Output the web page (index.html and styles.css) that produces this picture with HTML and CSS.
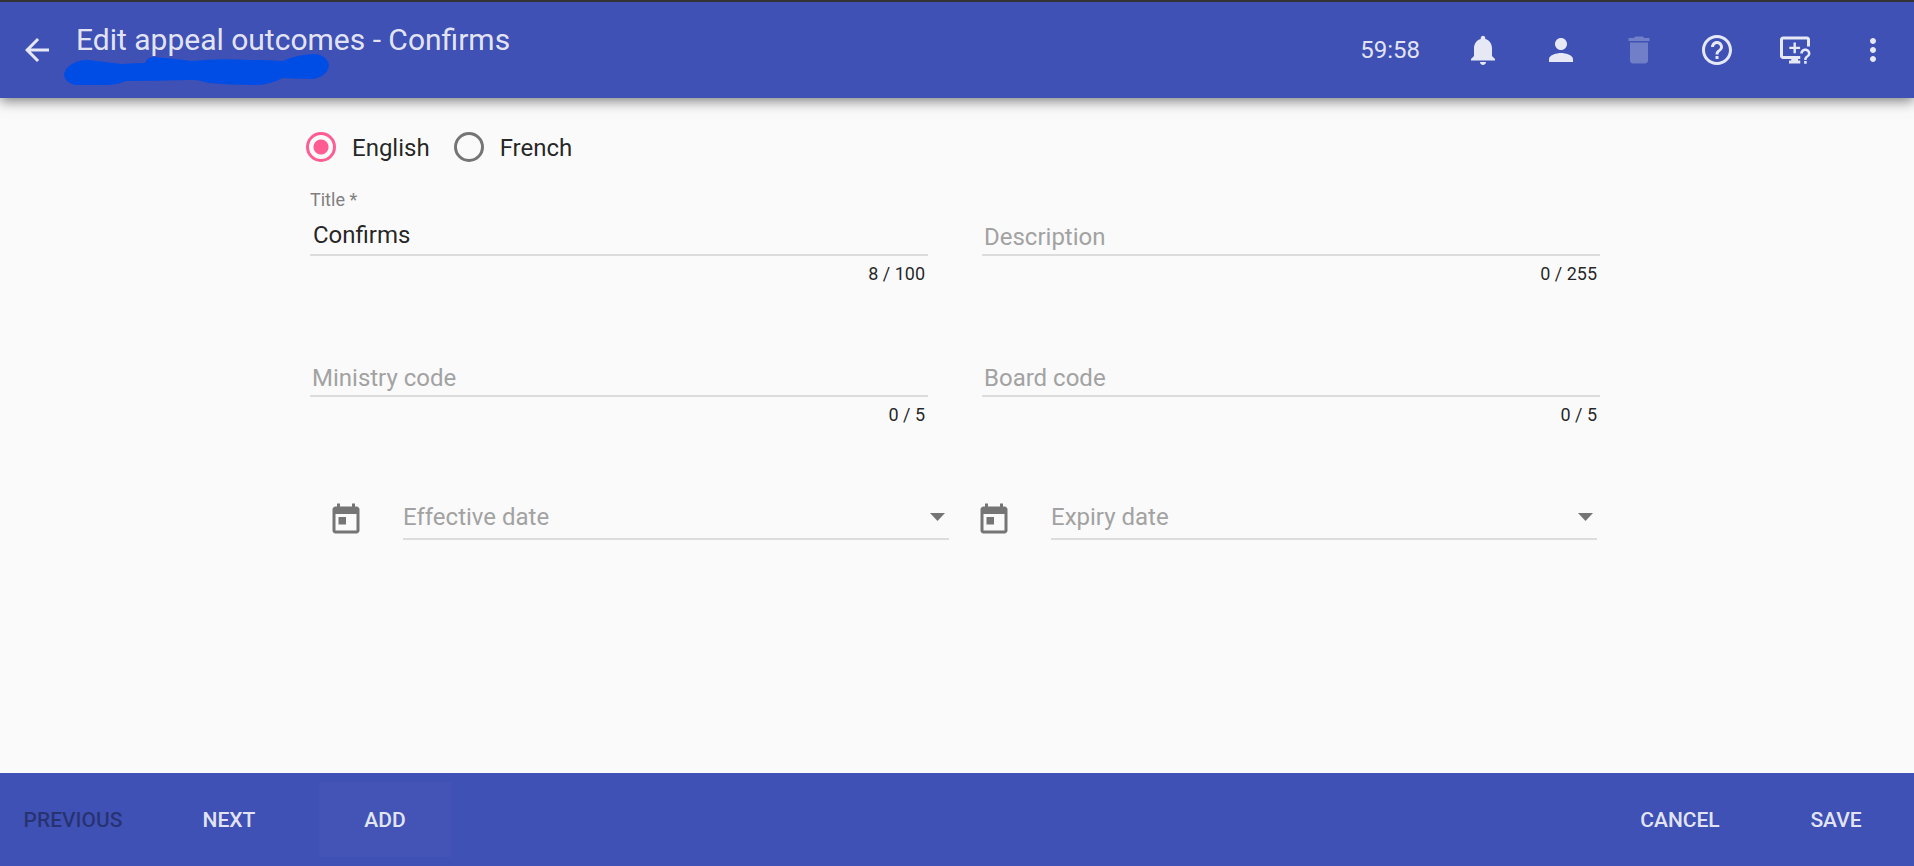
FILE: index.html
```
<!DOCTYPE html>
<html lang="en">
<head>
<meta charset="utf-8">
<meta name="viewport" content="width=device-width, initial-scale=1">
<title>Edit appeal outcomes - Confirms</title>
<link rel="stylesheet" href="styles.css">
</head>
<body>
<header class="toolbar">
  <button class="icon-button back" type="button" aria-label="Back">
    <svg class="icon" viewBox="0 0 24 24"><path d="M20 11H7.83l5.59-5.59L12 4l-8 8 8 8 1.41-1.41L7.83 13H20v-2z"/></svg>
  </button>
  <div class="heading">
    <h1 class="title">Edit appeal outcomes - Confirms</h1>
    <svg class="scribble" viewBox="0 0 266 32" aria-hidden="true"><path d="M12 8Q16 6 24 6Q42 8 58 10Q70 9 81 9Q83 3 91 3Q112 5 128 7Q156 4 184 6Q202 6 219 7Q234 0 252 0Q264 2 265 12Q263 22 250 25Q234 25 219 24Q204 31 194 31Q164 31 145 29Q130 25 124 26Q92 27 62 27Q52 31 42 31L12 31Q0 29 0 20Q2 12 12 8Z"/></svg>
  </div>
  <div class="actions">
    <time class="timer">59:58</time>
    <button class="icon-button" type="button" aria-label="Notifications">
      <svg class="icon" viewBox="0 0 24 24"><path d="M12 22c1.100 0 2-.9 2-2h-4c0 1.100.89 2 2 2zm6-6v-5c0-3.070-1.640-5.640-4.500-6.320V4c0-.83-.67-1.500-1.500-1.500s-1.500.67-1.500 1.500v.68C7.630 5.360 6 7.920 6 11v5l-2 2v1h16v-1l-2-2z"/></svg>
    </button>
    <button class="icon-button" type="button" aria-label="Account">
      <svg class="icon" viewBox="0 0 24 24"><path d="M12 12c2.210 0 4-1.790 4-4s-1.790-4-4-4-4 1.790-4 4 1.790 4 4 4zm0 2c-2.670 0-8 1.340-8 4v2h16v-2c0-2.660-5.330-4-8-4z"/></svg>
    </button>
    <button class="icon-button" type="button" aria-label="Delete" disabled>
      <svg class="icon" viewBox="0 0 24 24"><path d="M6 19c0 1.100.9 2 2 2h8c1.100 0 2-.9 2-2V7H6v12zM19 4h-3.500l-1-1h-5l-1 1H5v2h14V4z"/></svg>
    </button>
    <button class="icon-button" type="button" aria-label="Help">
      <svg class="icon" viewBox="0 0 24 24"><path d="M11 18h2v-2h-2v2zm1-16C6.480 2 2 6.480 2 12s4.480 10 10 10 10-4.480 10-10S17.520 2 12 2zm0 18c-4.410 0-8-3.590-8-8s3.590-8 8-8 8 3.590 8 8-3.590 8-8 8zm0-14c-2.210 0-4 1.790-4 4h2c0-1.100.9-2 2-2s2 .9 2 2c0 2-3 1.750-3 5h2c0-2.250 3-2.500 3-5 0-2.210-1.790-4-4-4z"/></svg>
    </button>
    <button class="icon-button" type="button" aria-label="Request support">
      <svg class="icon" viewBox="0 0 24 24"><path d="M4 3h16c1.100 0 2 .9 2 2v4.700h-2V5H4v11h11.500v2H14v1h1.500v2H8v-2h1.500v-1H4c-1.100 0-2-.9-2-2V5c0-1.100.9-2 2-2z"/><path d="M11 7h1.600v2.800h2.800v1.500h-2.800v2.800H11v-2.800H8.200V9.800H11z"/><path d="M18.100 19.400h1.700v1.700h-1.700zM18.900 11c-1.900 0-3.400 1.500-3.400 3.400h1.700c0-1 .7-1.700 1.700-1.700s1.700.7 1.700 1.700c0 1.600-2.500 1.500-2.500 4.200h1.700c0-1.900 2.500-2.100 2.500-4.200 0-1.900-1.500-3.400-3.400-3.400z"/></svg>
    </button>
    <button class="icon-button" type="button" aria-label="More options">
      <svg class="icon" viewBox="0 0 24 24"><path d="M12 8c1.100 0 2-.9 2-2s-.9-2-2-2-2 .9-2 2 .9 2 2 2zm0 2c-1.100 0-2 .9-2 2s.9 2 2 2 2-.9 2-2-.9-2-2-2zm0 6c-1.100 0-2 .9-2 2s.9 2 2 2 2-.9 2-2-.9-2-2-2z"/></svg>
    </button>
  </div>
</header>
<main class="content">
  <form class="form" id="outcome">
    <div class="languages" role="radiogroup" aria-label="Language">
      <label class="language"><input class="radio" type="radio" name="language" checked><span class="language-name">English</span></label>
      <label class="language"><input class="radio" type="radio" name="language"><span class="language-name">French</span></label>
    </div>
    <div class="fields">
      <div class="field">
        <label class="label" for="title">Title <span class="required">*</span></label>
        <input class="input filled" id="title" type="text" value="Confirms" maxlength="100">
        <div class="count">8 / 100</div>
      </div>
      <div class="field">
        <input class="input" type="text" placeholder="Description" aria-label="Description" maxlength="255">
        <div class="count">0 / 255</div>
      </div>
      <div class="field">
        <input class="input" type="text" placeholder="Ministry code" aria-label="Ministry code" maxlength="5">
        <div class="count">0 / 5</div>
      </div>
      <div class="field">
        <input class="input" type="text" placeholder="Board code" aria-label="Board code" maxlength="5">
        <div class="count">0 / 5</div>
      </div>
    </div>
    <div class="dates">
      <div class="date">
        <svg class="icon" viewBox="0 0 24 24" aria-hidden="true"><path d="M19 3h-1V1h-2v2H8V1H6v2H5c-1.110 0-1.990.9-1.990 2L3 19c0 1.100.89 2 2 2h14c1.100 0 2-.9 2-2V5c0-1.100-.9-2-2-2zm0 16H5V8h14v11zM7 10h5v5H7z"/></svg>
        <div class="date-box">
          <input class="date-input" type="text" placeholder="Effective date" aria-label="Effective date">
          <button class="arrow" type="button" aria-label="Choose effective date"></button>
        </div>
      </div>
      <div class="date">
        <svg class="icon" viewBox="0 0 24 24" aria-hidden="true"><path d="M19 3h-1V1h-2v2H8V1H6v2H5c-1.110 0-1.990.9-1.990 2L3 19c0 1.100.89 2 2 2h14c1.100 0 2-.9 2-2V5c0-1.100-.9-2-2-2zm0 16H5V8h14v11zM7 10h5v5H7z"/></svg>
        <div class="date-box">
          <input class="date-input" type="text" placeholder="Expiry date" aria-label="Expiry date">
          <button class="arrow" type="button" aria-label="Choose expiry date"></button>
        </div>
      </div>
    </div>
  </form>
</main>
<footer class="footer">
  <button class="button" type="button" disabled>PREVIOUS</button>
  <button class="button" type="button">NEXT</button>
  <button class="button active" type="button">ADD</button>
  <span class="spacer"></span>
  <button class="button" type="button">CANCEL</button>
  <button class="button" type="submit" form="outcome">SAVE</button>
</footer>
</body>
</html>
```
FILE: styles.css
```
* {
  box-sizing: border-box;
}

body {
  display: flex;
  flex-direction: column;
  min-height: 100vh;
  margin: 0;
  background: #fafafa;
  color: rgba(0, 0, 0, 0.87);
  font: 24px/32px Roboto, sans-serif;
}

button,
input {
  margin: 0;
  padding: 0;
  border: 0;
  border-radius: 0;
  background: none;
  color: inherit;
  font: inherit;
}

.icon {
  display: block;
  flex: none;
  width: 36px;
  height: 36px;
  fill: currentColor;
}

.toolbar {
  display: flex;
  align-items: center;
  min-height: 98px;
  border-top: 2px solid #333;
  background: #3f51b5;
  box-shadow: 0 3px 12px rgba(0, 0, 0, 0.5);
  color: rgba(255, 255, 255, 0.87);
}

.icon-button {
  display: grid;
  place-items: center;
  width: 60px;
  height: 60px;
}

.icon-button:disabled {
  opacity: 0.3;
}

.back {
  margin-left: 7px;
}

.heading {
  position: relative;
  flex: 1;
  padding-left: 9px;
}

.title {
  margin: 0 0 20px;
  font-size: 30px;
  font-weight: 400;
  line-height: 36px;
}

.scribble {
  position: absolute;
  top: 32px;
  left: -3px;
  width: 266px;
  height: 32px;
  fill: #004de6;
}

.actions {
  display: flex;
  align-items: center;
  gap: 18px;
  padding-right: 11px;
}

.timer {
  margin-right: 15px;
}

.content {
  flex: 1;
  padding: 0 28px 0 24px;
}

.form {
  width: 100%;
  max-width: 1290px;
  margin: 0 auto;
  padding-top: 32px;
}

.languages {
  display: flex;
  gap: 28px;
}

.language {
  display: flex;
  align-items: center;
  gap: 16px;
}

.language-name {
  padding-top: 2px;
}

.radio {
  appearance: none;
  width: 30px;
  height: 30px;
  margin-left: -4px;
  border: 3px solid #757575;
  border-radius: 50%;
}

.radio:checked {
  border-color: #ff5c93;
  background: radial-gradient(circle, #ff5c93 7px, transparent 8px);
}

.fields {
  display: grid;
  grid-template-columns: 1fr 1fr;
  column-gap: 54px;
  margin-top: -19px;
}

.field {
  display: flex;
  flex-direction: column;
  justify-content: flex-end;
  height: 141px;
}

.label {
  padding-bottom: 2px;
  color: #808080;
  font-size: 18px;
  line-height: 24px;
}

.input {
  width: 100%;
  height: 42px;
  padding: 6px 2px 0;
  border-bottom: 2px solid #dcdcdc;
}

.filled {
  padding: 2px 3px 0;
}

.input::placeholder,
.date-input::placeholder {
  color: #a2a2a2;
  opacity: 1;
}

.count {
  padding: 6px 3px 0;
  font-size: 18px;
  line-height: 24px;
  text-align: right;
}

.dates {
  display: grid;
  grid-template-columns: 1fr 1fr;
  column-gap: 27px;
  padding: 69px 3px 0 18px;
}

.date {
  display: flex;
  align-items: flex-end;
  gap: 39px;
}

.date .icon {
  margin-bottom: 2px;
  fill: #757575;
}

.date-box {
  display: flex;
  align-items: center;
  flex: 1;
  border-bottom: 2px solid #dcdcdc;
}

.date-input {
  flex: 1;
  min-width: 0;
  height: 42px;
}

.arrow {
  width: 15px;
  height: 8px;
  margin-right: 4px;
  background: #757575;
  clip-path: polygon(0 0, 100% 0, 50% 100%);
}

.footer {
  display: flex;
  align-items: center;
  gap: 24px;
  padding: 9px 12px 9px 7px;
  background: #3f51b5;
  color: rgba(255, 255, 255, 0.87);
}

.button {
  min-width: 132px;
  height: 75px;
  padding: 0 9px;
  font-size: 21px;
  font-weight: 500;
}

.button:disabled {
  color: rgba(0, 0, 0, 0.38);
}

.active {
  background: #4354b6;
}

.spacer {
  flex: 1;
}
```
